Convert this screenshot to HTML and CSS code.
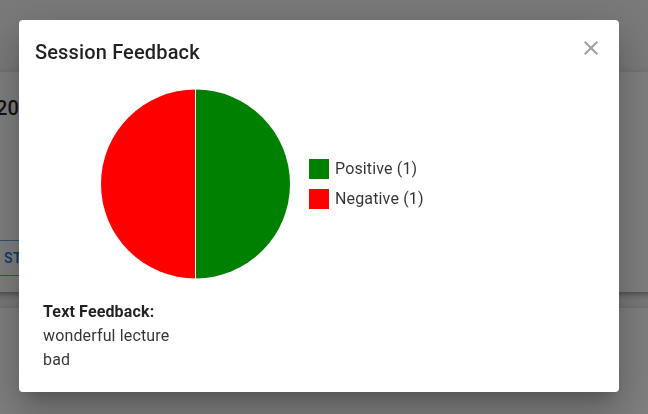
FILE: index.html
```html
<!DOCTYPE html>
<html lang="en">
<head>
<meta charset="utf-8">
<meta name="viewport" content="width=device-width, initial-scale=1">
<title>Session Feedback</title>
<link rel="stylesheet" href="styles.css">
</head>
<body>
<main class="page">
  <section class="card">
    <h1 class="card-title">20</h1>
    <button class="card-button" type="button">START</button>
  </section>
  <section class="card card-next"></section>
</main>
<div class="backdrop">
  <div class="dialog" role="dialog" aria-modal="true" aria-labelledby="dialog-title">
    <header class="dialog-header">
      <h2 class="dialog-title" id="dialog-title">Session Feedback</h2>
      <button class="close" type="button" aria-label="Close">
        <svg viewBox="0 0 24 24" width="24" height="24" aria-hidden="true"><path d="M19 6.41L17.59 5 12 10.59 6.41 5 5 6.41 10.59 12 5 17.59 6.41 19 12 13.41 17.59 19 19 17.59 13.41 12z"/></svg>
      </button>
    </header>
    <div class="chart">
      <svg class="pie" viewBox="0 0 190 190" width="190" height="190" role="img" aria-label="Positive 1, negative 1">
        <path class="positive" d="M94.5 0.5A94.5 94.5 0 0 1 94.5 189.5z"/>
        <path class="negative" d="M94.5 0.5A94.5 94.5 0 0 0 94.5 189.5z"/>
        <path class="divider" d="M94.5 0V190"/>
      </svg>
      <ul class="legend">
        <li><span class="swatch swatch-positive"></span>Positive (1)</li>
        <li><span class="swatch swatch-negative"></span>Negative (1)</li>
      </ul>
    </div>
    <div class="comments">
      <h3>Text Feedback:</h3>
      <p>wonderful lecture</p>
      <p>bad</p>
    </div>
  </div>
</div>
</body>
</html>
```
FILE: styles.css
```css
* {
  box-sizing: border-box;
}

body {
  height: 100vh;
  margin: 0;
  overflow: hidden;
  background: #f5f5f5;
  color: rgba(0, 0, 0, 0.87);
  font: 400 16px/24px Roboto, sans-serif;
}

h1, h2, h3, p, ul {
  margin: 0;
  padding: 0;
}

.page {
  display: grid;
  grid-template-rows: auto 1fr;
  gap: 16px;
  height: 100%;
  margin: 0 -20px;
  padding-top: 72px;
}

.card {
  display: flex;
  flex-direction: column;
  align-items: flex-start;
  gap: 116px;
  padding: 20px 16px 16px;
  background: #fff;
  box-shadow: 0 2px 4px -1px rgba(0, 0, 0, 0.2), 0 4px 5px rgba(0, 0, 0, 0.14), 0 1px 10px rgba(0, 0, 0, 0.12);
}

.card-title,
.dialog-title {
  font-size: 20px;
  font-weight: 500;
  line-height: 32px;
  letter-spacing: 0.0075em;
}

.card-button {
  height: 36px;
  padding: 0 7px;
  border: 1px solid #64a5e6;
  border-radius: 4px;
  background: none;
  color: #1976d2;
  font: 500 14px/24px Roboto, sans-serif;
  letter-spacing: 0.02857em;
}

.backdrop {
  position: fixed;
  inset: 0;
  padding: 20px 29px 20px 19px;
  background: rgba(0, 0, 0, 0.5);
}

.dialog {
  max-width: 600px;
  border-radius: 4px;
  background: #fff;
  box-shadow: 0 11px 15px -7px rgba(0, 0, 0, 0.2), 0 24px 38px 3px rgba(0, 0, 0, 0.14), 0 9px 46px 8px rgba(0, 0, 0, 0.12);
}

.dialog-header {
  display: flex;
  align-items: flex-start;
  justify-content: space-between;
  padding: 16px 16px 0;
}

.close {
  display: flex;
  padding: 0;
  border: 0;
  background: none;
  fill: #9e9e9e;
}

.chart {
  display: flex;
  align-items: center;
  gap: 18px;
  padding: 21px 82px 21px;
}

.pie {
  display: block;
}

.positive {
  fill: #008000;
}

.negative {
  fill: #f00;
}

.divider {
  stroke: #fff;
}

.legend {
  display: grid;
  gap: 10px;
  list-style: none;
}

.legend li {
  display: flex;
  align-items: center;
  gap: 6px;
  line-height: 20px;
}

.legend li,
.comments {
  letter-spacing: 0.00938em;
}

.legend li,
.comments p {
  color: rgba(0, 0, 0, 0.8);
}

.swatch {
  width: 20px;
  height: 20px;
}

.swatch-positive {
  background: #008000;
}

.swatch-negative {
  background: #f00;
}

.comments {
  padding: 0 24px 20px;
}

.comments h3 {
  font-size: 16px;
  font-weight: 700;
}
```
